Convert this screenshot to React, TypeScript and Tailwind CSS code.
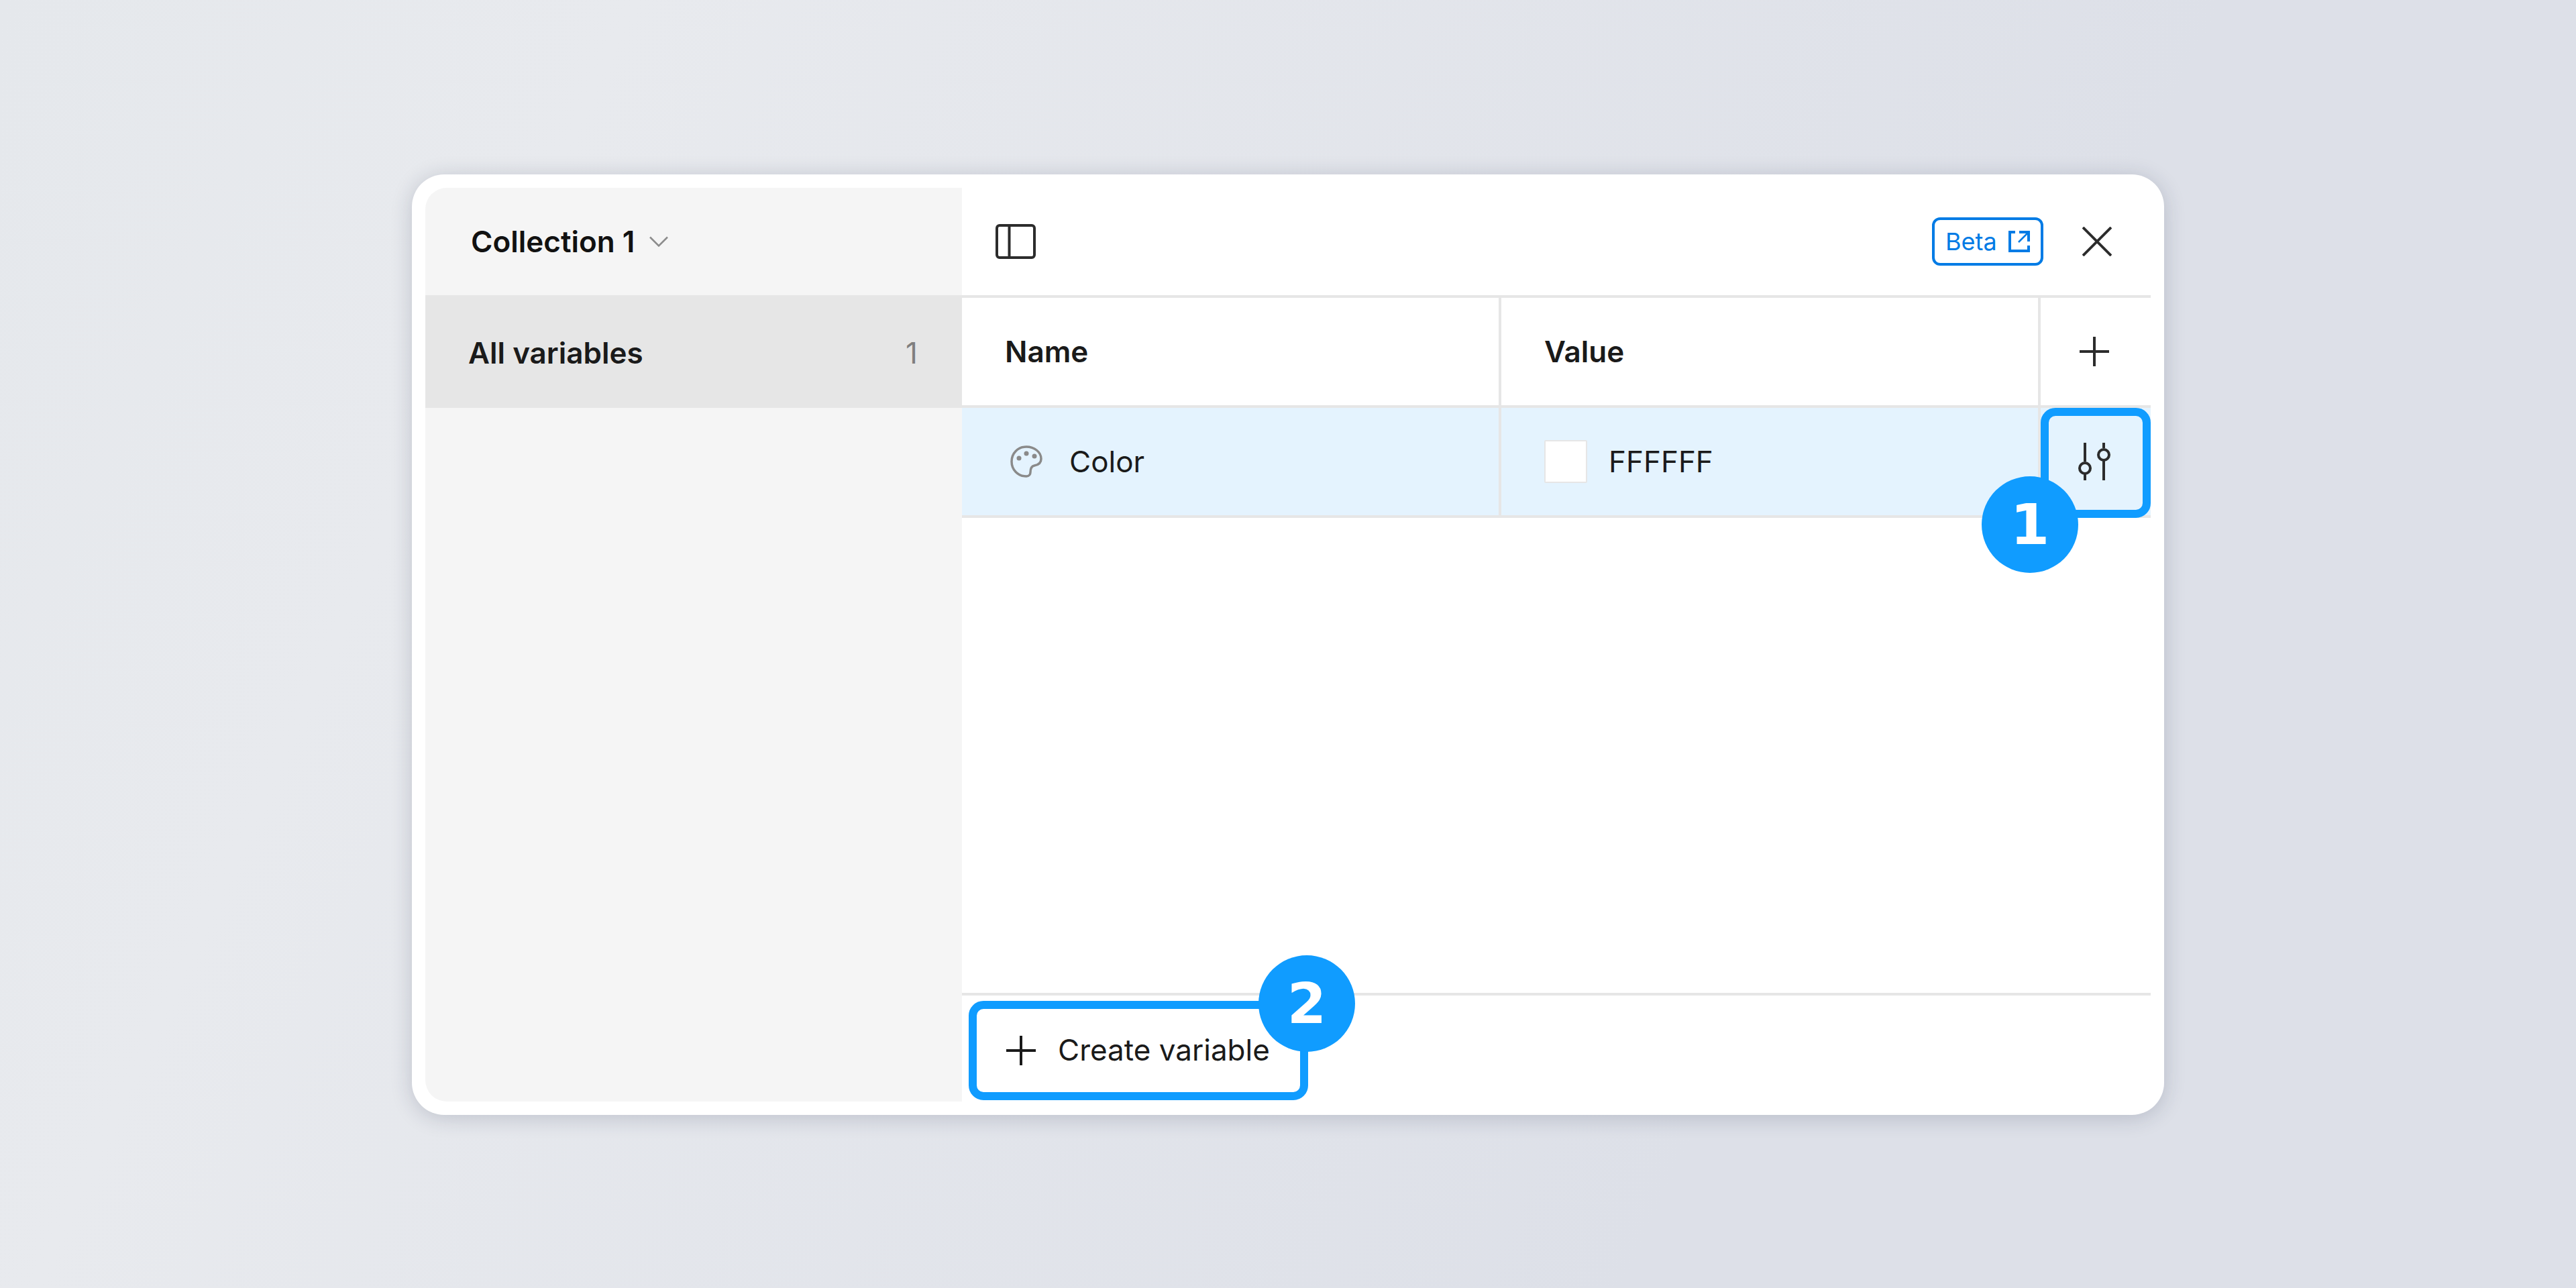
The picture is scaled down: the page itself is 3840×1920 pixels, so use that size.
export default function App() {
  const badge = "absolute w-[144px] h-[144px] rounded-full bg-[#109cff] flex items-center justify-center text-white text-[84px] font-bold font-['DejaVu_Sans',sans-serif] leading-none";
  const line = "h-[160px] flex items-center border-r-4 border-[#e6e6e6] w-[804px] pl-[64px]";
  return (
    <div className="w-[3840px] h-[1920px] pt-[260px] flex justify-center items-start bg-linear-[115deg] from-[#e5e8ec] from-0% via-[#e8eaee] via-20% to-[#dde0e8] to-70% font-['Inter',sans-serif] text-[44px] text-[#1a1a1a] overflow-hidden">
      <div className="w-[2612px] h-[1402px] p-[20px] flex bg-white rounded-[48px] shadow-[0_4px_32px_rgba(30,40,70,0.2)]">
        <aside className="w-[800px] bg-[#f5f5f5] rounded-l-[32px] flex flex-col">
          <div className="h-[160px] flex items-center pl-[68px] gap-[22px] font-semibold text-[#111]">
            <span>Collection 1</span>
            <svg width="28" height="16" viewBox="0 0 28 16" fill="none" stroke="#8c8c8c" strokeWidth="2.5"><path d="M1 1.5L14 14.5L27 1.5" /></svg>
          </div>
          <div className="h-[168px] bg-[#e6e6e6] flex items-center justify-between pl-[64px] pr-[66px] pt-[3px] font-semibold">
            <span>All variables</span>
            <span className="font-normal text-[#7f7f7f]">1</span>
          </div>
        </aside>
        <main className="flex-1 flex flex-col">
          <div className="h-[164px] border-b-4 border-[#e6e6e6] flex items-center pl-[50px] pr-[58px]">
            <svg width="60" height="52" viewBox="0 0 60 52" fill="none" stroke="#2c2c2c" strokeWidth="4">
              <rect x="2" y="2" width="56" height="48" rx="4" />
              <path d="M20.5 2V50" />
            </svg>
            <div className="ml-auto w-[166px] h-[72px] border-4 border-[#007be5] rounded-[12px] flex items-center pl-[16px] gap-[17px] text-[#007be5] text-[36px]">
              <span>Beta</span>
              <svg width="32" height="32" viewBox="0 0 32 32" fill="none" stroke="#007be5" strokeWidth="4">
                <path d="M10 2H2V30H30V22" />
                <path d="M16 2H30V16" />
                <path d="M28 4L15 17" strokeWidth="2.5" />
              </svg>
            </div>
            <svg className="ml-[58px]" width="44" height="44" viewBox="0 0 44 44" fill="none" stroke="#2c2c2c" strokeWidth="4"><path d="M1 1L43 43M43 1L1 43" /></svg>
          </div>
          <div className="h-[164px] border-b-4 border-[#e6e6e6] flex items-center font-semibold">
            <div className={line}>Name</div>
            <div className={line}>Value</div>
            <div className="w-[164px] flex justify-center pr-[4px]">
              <svg width="44" height="44" viewBox="0 0 44 44" fill="none" stroke="#2c2c2c" strokeWidth="4"><path d="M22 0V44M0 22H44" /></svg>
            </div>
          </div>
          <div className="h-[164px] border-b-4 border-[#e6e6e6] bg-[#e4f3fe] flex items-center">
            <div className={line + " !pl-[72px] gap-[40px]"}>
              <svg width="48" height="48" viewBox="0 0 48 48" fill="none" stroke="#8a8a8a" strokeWidth="3.5">
                <path d="M24 2C11 2 2 12 2 24C2 36 11 46 24 46C28 46 30 43 30 40C30 36 31 31 36 30C42 29 46 26 46 20C46 10 36 2 24 2Z" />
                <circle cx="13" cy="19" r="3.5" fill="#8a8a8a" stroke="none" />
                <circle cx="24" cy="12" r="3.5" fill="#8a8a8a" stroke="none" />
                <circle cx="36" cy="16" r="3.5" fill="#8a8a8a" stroke="none" />
              </svg>
              <span>Color</span>
            </div>
            <div className={line + " gap-[32px]"}>
              <div className="w-[64px] h-[64px] bg-white border-2 border-[#e6e6e6] rounded-[2px]" />
              <span>FFFFFF</span>
            </div>
            <div className="relative w-[164px] h-[160px]">
              <div className="absolute left-0 right-0 top-0 -bottom-[4px] border-[12px] border-[#109cff] rounded-[22px] flex items-center justify-center">
                <svg width="48" height="56" viewBox="0 0 48 56" fill="none" stroke="#2c2c2c" strokeWidth="4" className="mr-[4px] mb-[4px]">
                  <path d="M10 0V28M10 46V56M38 0V8M38 26V56" />
                  <circle cx="10" cy="38" r="8" />
                  <circle cx="38" cy="18" r="8" />
                </svg>
              </div>
              <div className={badge + " left-[-88px] top-[102px]"}>1</div>
            </div>
          </div>
          <div className="flex-1" />
          <div className="h-[162px] border-t-4 border-[#e6e6e6] pt-[8px] pl-[10px]">
            <div className="relative w-[506px] h-[148px] border-[12px] border-[#109cff] rounded-[22px] flex items-center pl-[44px] gap-[33px]">
              <svg width="44" height="44" viewBox="0 0 44 44" fill="none" stroke="#1a1a1a" strokeWidth="4"><path d="M22 0V44M0 22H44" /></svg>
              <span className="mb-[3px]">Create variable</span>
              <div className={badge + " left-[420px] top-[-80px]"}>2</div>
            </div>
          </div>
        </main>
      </div>
    </div>
  );
}
